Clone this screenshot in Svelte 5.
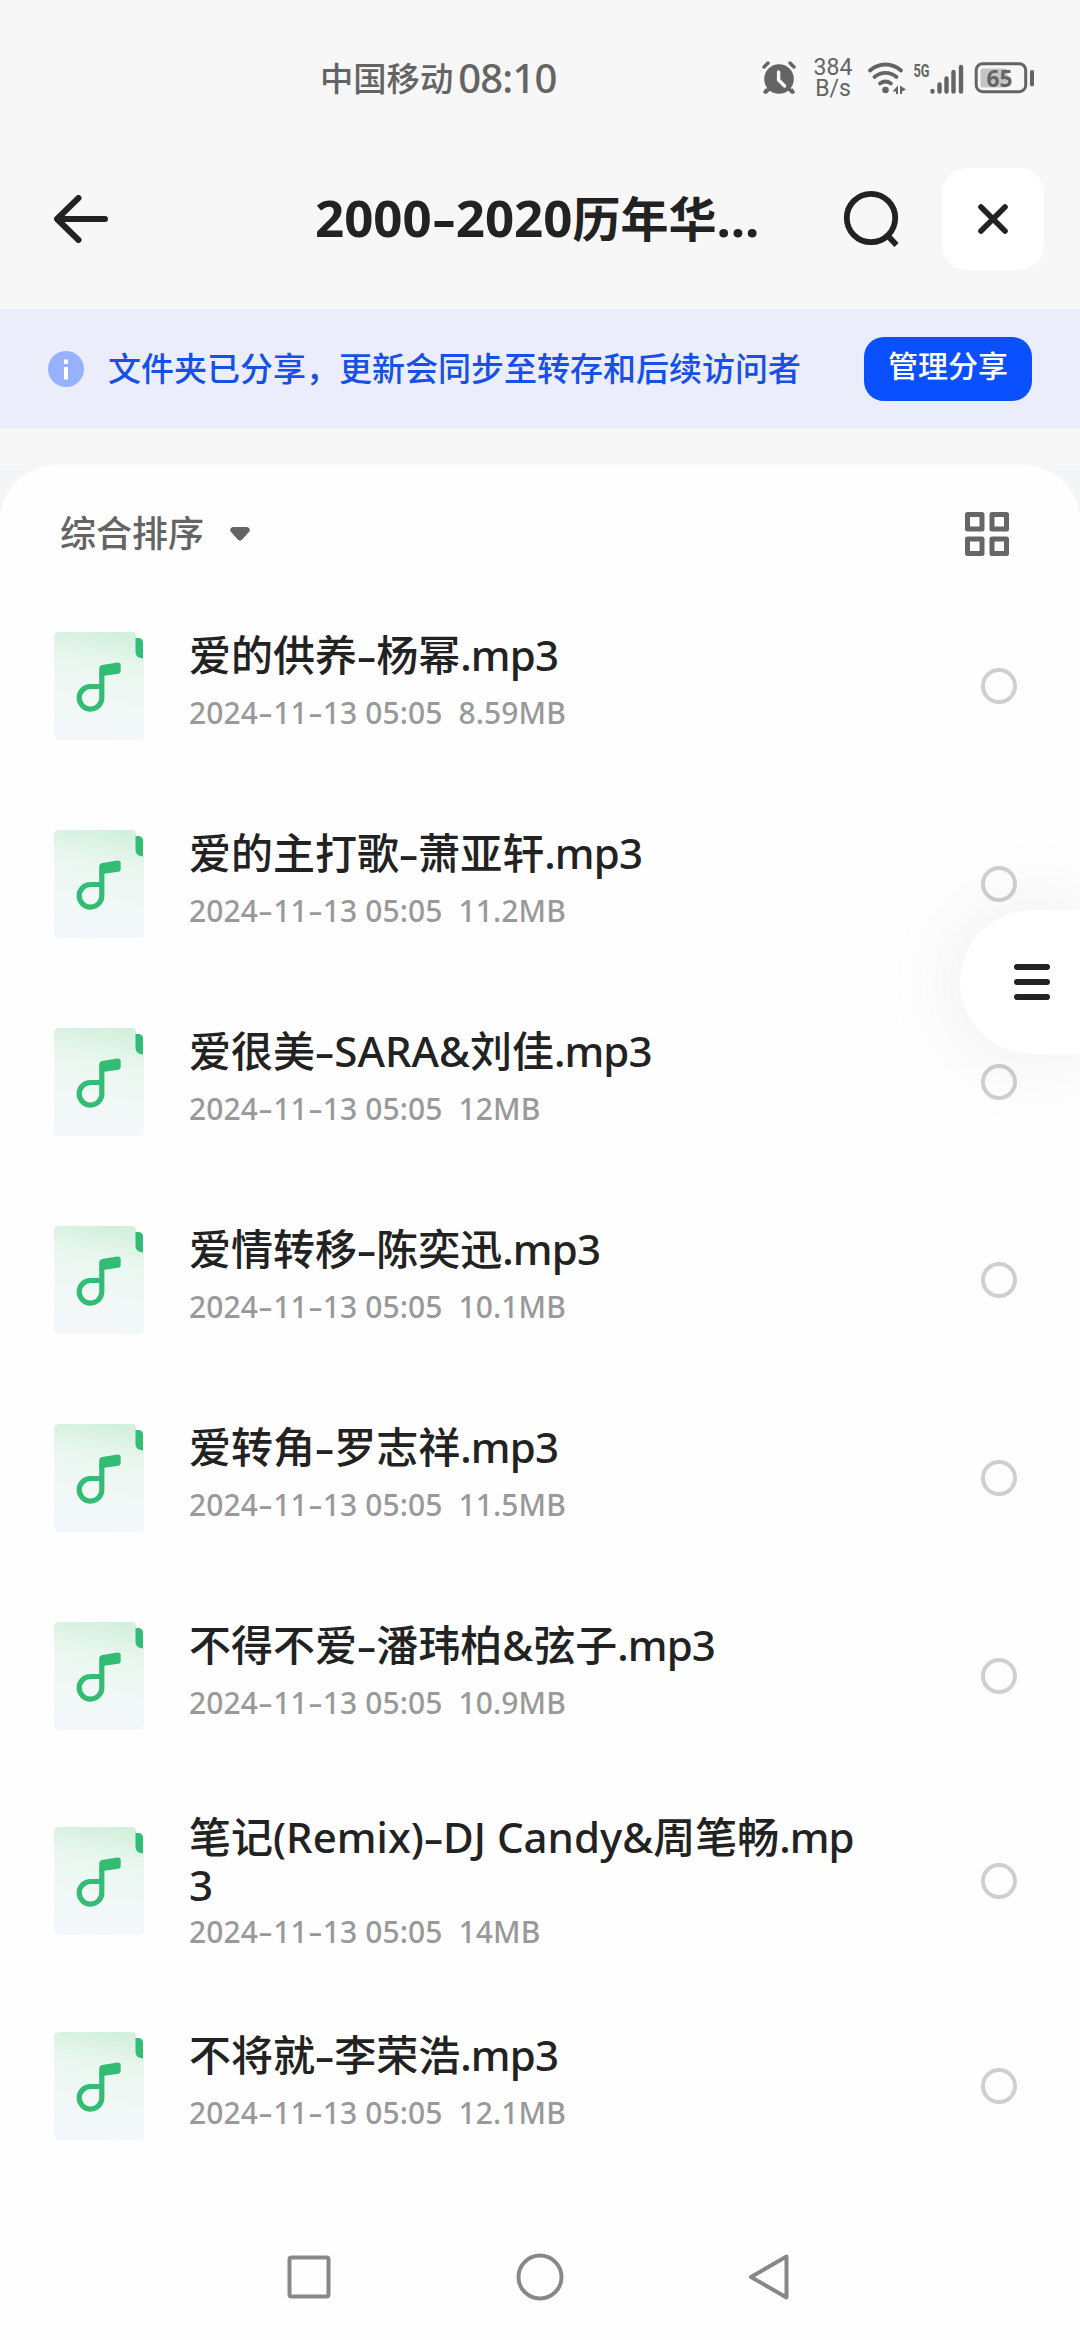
<script lang="ts">
  const title = '2000-2020历年华...';

  const songs = [
    { name: '爱的供养-杨幂.mp3', date: '2024-11-13 05:05', size: '8.59MB' },
    { name: '爱的主打歌-萧亚轩.mp3', date: '2024-11-13 05:05', size: '11.2MB' },
    { name: '爱很美-SARA&刘佳.mp3', date: '2024-11-13 05:05', size: '12MB' },
    { name: '爱情转移-陈奕迅.mp3', date: '2024-11-13 05:05', size: '10.1MB' },
    { name: '爱转角-罗志祥.mp3', date: '2024-11-13 05:05', size: '11.5MB' },
    { name: '不得不爱-潘玮柏&弦子.mp3', date: '2024-11-13 05:05', size: '10.9MB' },
    { name: '笔记(Remix)-DJ Candy&周笔畅.mp3', date: '2024-11-13 05:05', size: '14MB', tall: true },
    { name: '不将就-李荣浩.mp3', date: '2024-11-13 05:05', size: '12.1MB' }
  ];

  // hyphens, latin, chinese and the extension get their own spans
  function runs(text: string) {
    return text.match(/-|[\x20-\x2c\x2e-\x7e]+|[^\x20-\x7e]+/g) ?? [];
  }

  function kind(run: string) {
    if (run === '-') return 'dash';
    if (run === '.mp3') return 'ext';
    return run.charCodeAt(0) < 128 ? 'latin' : 'han';
  }
</script>

{#snippet mixed(text: string)}{#each runs(text) as run}<span class={kind(run)}>{run}</span>{/each}{/snippet}

<div class="screen">
  <div class="status">
    <span class="carrier">中国移动</span>
    <span class="time">08:10</span>
    <div class="status-icons">
      <svg class="alarm" width="34" height="34" viewBox="0 0 34 34">
        <path d="M6 27l-3 4M28 27l3 4M2 6l4-4M32 6l-4-4" stroke="#646464" stroke-width="3.4" stroke-linecap="round" />
        <circle cx="17" cy="18" r="16" fill="#f7f7f7" />
        <circle cx="17" cy="18" r="14.8" fill="#646464" />
        <path d="M7 28l-3 3M27 28l3 3" stroke="#646464" stroke-width="3.4" stroke-linecap="round" />
        <path d="M16.600 11v8l6 6" fill="none" stroke="#f7f7f7" stroke-width="3.400" stroke-linecap="round" stroke-linejoin="round" />
      </svg>
      <div class="speed"><span>384</span><span>B/s</span></div>
      <svg class="wifi" width="40" height="34" viewBox="0 0 40 34">
        <g fill="none" stroke="#646464" stroke-width="3.800" stroke-linecap="round">
          <path d="M3 9.500a23 23 0 0 1 31 0" />
          <path d="M7.500 16a16.500 16.500 0 0 1 22 0" />
          <path d="M13 22.500a9.500 9.500 0 0 1 11 0" />
        </g>
        <circle cx="18.500" cy="29" r="3.300" fill="#646464" />
        <path d="M31 24.500v8.500h-2v-2.500h-3.500zM33 24.500l6 4-4 2v2.500h-2z" fill="#646464" />
      </svg>
      <svg class="signal" width="52" height="34" viewBox="0 0 52 34">
        <text x="0.500" y="15.500" textLength="16" lengthAdjust="spacingAndGlyphs">5G</text>
        <path d="M19.500 30v.500M26.500 23.500v7M33.500 17.500v13M40.500 11v19.500M48 6v24.500" fill="none" stroke="#646464" stroke-width="4.400" stroke-linecap="round" />
      </svg>
      <svg class="battery" width="62" height="34" viewBox="0 0 62 34">
        <rect x="2.200" y="2.700" width="49.500" height="28" rx="6.500" fill="none" stroke="#646464" stroke-width="3" />
        <rect x="6.500" y="7.500" width="27" height="19" rx="2.500" fill="#c4c4c4" />
        <rect x="56" y="9" width="4" height="16.500" rx="2" fill="#646464" />
        <text x="12.500" y="25.500" textLength="26" lengthAdjust="spacingAndGlyphs">65</text>
      </svg>
    </div>
  </div>

  <header class="bar">
    <button class="back" aria-label="返回">
      <svg width="54" height="48" viewBox="0 0 54 48" fill="none" stroke="#222" stroke-width="6" stroke-linecap="round" stroke-linejoin="round">
        <path d="M24.500 3L3 24l21.500 21M4 24h47" />
      </svg>
    </button>
    <h1>{@render mixed(title)}</h1>
    <button class="search" aria-label="搜索">
      <svg width="58" height="58" viewBox="0 0 58 58" fill="none" stroke="#222" stroke-width="5.800">
        <circle cx="28" cy="28" r="24.200" />
        <path d="M44.500 45.500l9 9.500" />
      </svg>
    </button>
    <button class="close" aria-label="关闭">
      <svg width="30" height="30" viewBox="0 0 30 30" stroke="#222" stroke-width="5.600" stroke-linecap="round">
        <path d="M3 3l24 24M27 3L3 27" />
      </svg>
    </button>
  </header>

  <div class="notice">
    <svg width="36" height="36" viewBox="0 0 36 36">
      <circle cx="18" cy="18" r="18" fill="#97b2fd" />
      <path d="M16 8.500h4v4.500h-4zM16 16h4v12.500h-4z" fill="#fff" />
    </svg>
    <p>文件夹已分享，更新会同步至转存和后续访问者</p>
    <button class="manage">管理分享</button>
  </div>

  <div class="backdrop">
    <main class="panel">
      <div class="sort">
        <span>综合排序</span>
        <svg class="caret" width="20" height="14" viewBox="0 0 20 14">
          <path d="M3.500 0h13c3 0 4.300 3 2.400 5l-6.700 7.600c-1.200 1.400-3.200 1.400-4.400 0L1.100 5C-.8 3 .5 0 3.500 0z" fill="#646464" />
        </svg>
        <svg class="grid" width="44" height="44" viewBox="0 0 44 44" fill="none" stroke="#666" stroke-width="5" stroke-linejoin="round">
          <path d="M2.500 2.500h14.500v14.500h-14.500zM27 2.500h14.500v14.500h-14.500zM2.500 27h14.500v14.500h-14.500zM27 27h14.500v14.500h-14.500z" />
        </svg>
      </div>

      <ul>
        {#each songs as song}
          <li class:tall={song.tall}>
            <svg class="file" width="90" height="108" viewBox="0 0 90 108">
              <defs>
                <linearGradient id="paper" x1="0.550" y1="0" x2="0.400" y2="1">
                  <stop offset="0" stop-color="#d3f0dd" />
                  <stop offset="0.300" stop-color="#eaf7f0" />
                  <stop offset="0.700" stop-color="#f2f8f7" />
                  <stop offset="1" stop-color="#f3f7fb" />
                </linearGradient>
              </defs>
              <path d="M5 0h73c2.500 0 4 1.500 4 4v16c0 4 3 6 8 7v76c0 3-2 5-5 5H5c-3 0-5-2-5-5V5c0-3 2-5 5-5z" fill="url(#paper)" />
              <path d="M81.500 6h2.500c4 0 5 2.500 5 5v15.500c-5-.500-7.500-2.500-7.500-7z" fill="#33bd74" />
              <path d="M47.800 42V65.700a11.300 11.300 0 1 1-11.300-11.200h11.300" fill="none" stroke="#33bd74" stroke-width="5.200" />
              <path d="M45.200 36.500c0-2 1.200-3.300 3-3.600l15-2.300c2-.300 3.500.700 3.500 2.400v6c0 1.600-.800 2.400-2.500 2.700L45.200 44.500z" fill="#33bd74" />
            </svg>
            <div class="info">
              <h2>{@render mixed(song.name)}</h2>
              <p>{@render mixed(song.date + '  ' + song.size)}</p>
            </div>
            <span class="radio"></span>
          </li>
        {/each}
      </ul>
    </main>
  </div>

  <nav>
    <svg width="44" height="48" viewBox="0 0 44 48"><rect x="2.500" y="4.500" width="39" height="39" rx="2" /></svg>
    <svg width="48" height="48" viewBox="0 0 48 48"><circle cx="24" cy="24" r="21.500" /></svg>
    <svg width="42" height="48" viewBox="0 0 42 48"><path d="M38.500 3.500v41L3 24z" /></svg>
  </nav>

  <button class="floating" aria-label="菜单">
    <i></i><i></i><i></i>
  </button>
</div>

<style>
  :global(body) {
    background: #fefefe;
  }

  .screen {
    position: relative;
    width: 1080px;
    height: 2340px;
    display: flex;
    flex-direction: column;
    overflow: hidden;
    background: #f7f7f7;
    font-family: "Noto Sans", "Noto Sans CJK SC", sans-serif;
    color: #222;
  }

  .screen * {
    box-sizing: border-box;
  }

  button {
    padding: 0;
    border: 0;
    background: none;
    font-family: inherit;
    display: flex;
    align-items: center;
    justify-content: center;
  }

  h1,
  h2,
  p,
  ul {
    margin: 0;
    padding: 0;
  }

  svg {
    display: block;
    flex: none;
  }

  .dash {
    display: inline-block;
    width: 0.5em;
    text-align: center;
    transform: scaleX(1.5);
  }

  .status {
    height: 156px;
    display: flex;
    align-items: center;
    padding: 0 44px 0 320px;
    color: #646464;
  }

  .carrier {
    font-size: 33.3px;
    font-weight: 500;
    line-height: 48px;
  }

  .time {
    margin-left: 5px;
    font-size: 40px;
    font-weight: 500;
    line-height: 48px;
    letter-spacing: -0.8px;
  }

  .status-icons {
    margin-left: auto;
    display: flex;
    align-items: center;
  }

  .speed {
    width: 40px;
    margin: 0 14px 0 17px;
    display: flex;
    flex-direction: column;
    align-items: center;
    font-family: Roboto, sans-serif;
    font-size: 23px;
    line-height: 21px;
  }

  .signal {
    margin: 0 9px 0 6px;
  }

  .signal text {
    font: 700 18px Roboto, sans-serif;
    fill: #646464;
  }

  .battery text {
    font: 700 24px "Noto Sans", sans-serif;
    fill: #646464;
  }

  .bar {
    height: 153px;
    display: flex;
    align-items: center;
    padding: 0 36px 27px 54px;
  }

  h1 {
    width: 470px;
    margin-left: 207px;
    padding-bottom: 3px;
    font-size: 48px;
    font-weight: 700;
    line-height: 72px;
    white-space: nowrap;
  }

  h1 .latin {
    font-size: 51px;
  }

  .search {
    margin-left: 58px;
  }

  .close {
    width: 102px;
    height: 102px;
    margin-left: auto;
    border-radius: 25px;
    background: #fff;
  }

  .notice {
    height: 120px;
    display: flex;
    align-items: center;
    padding: 0 48px;
    background: #ebedfa;
  }

  .notice p {
    margin-left: 24px;
    font-size: 33px;
    font-weight: 500;
    line-height: 48px;
    color: #1650e6;
    white-space: nowrap;
  }

  .manage {
    width: 168px;
    height: 64px;
    margin-left: auto;
    padding-bottom: 6px;
    border-radius: 20px;
    background: #0b50ff;
    color: #fff;
    font-size: 30px;
    font-weight: 500;
    line-height: 44px;
  }

  .backdrop {
    margin-top: 36px;
    flex: 1;
    background: #f3f5f6;
  }

  .panel {
    height: 100%;
    border-radius: 56px 56px 0 0;
    background: #fefefe;
  }

  .sort {
    height: 122px;
    display: flex;
    align-items: center;
    padding: 16px 71px 0 60px;
    font-size: 36px;
    font-weight: 500;
    line-height: 54px;
    color: #646464;
  }

  .caret {
    margin-left: 26px;
  }

  .grid {
    margin-left: auto;
  }

  ul {
    list-style: none;
  }

  li {
    height: 198px;
    display: flex;
    align-items: center;
    padding: 0 63px 0 54px;
  }

  .info {
    width: 680px;
    margin-left: 45px;
    padding-bottom: 5px;
  }

  h2 {
    font-size: 42px;
    font-weight: 500;
    line-height: 48px;
    word-break: break-all;
    margin-bottom: 11px;
  }

  h2 .dash {
    width: 0.46em;
  }

  h2 .ext {
    letter-spacing: -0.9px;
  }

  .info p {
    font-size: 30px;
    font-weight: 500;
    line-height: 46px;
    letter-spacing: 0.12px;
    color: #999;
    white-space: pre;
  }

  .tall {
    height: 212px;
  }

  .tall .info {
    padding: 6px 0 0;
  }

  .tall h2 {
    margin-bottom: 0;
  }

  .radio {
    width: 36px;
    height: 36px;
    margin-left: auto;
    border: 4px solid #cfcfcf;
    border-radius: 50%;
  }

  nav {
    height: 126px;
    display: flex;
    align-items: center;
    justify-content: space-between;
    padding: 0 290px 0 287px;
    background: #fefefe;
  }

  nav svg {
    fill: none;
    stroke: #888;
    stroke-width: 4px;
    stroke-linejoin: round;
  }

  .floating {
    position: absolute;
    top: 910px;
    right: 0;
    width: 120px;
    height: 144px;
    padding-left: 24px;
    flex-direction: column;
    gap: 9px;
    border-radius: 72px 0 0 72px;
    background: #fff;
    box-shadow: 0 0 90px rgba(0, 0, 0, 0.08);
  }

  .floating i {
    width: 36px;
    height: 6px;
    border-radius: 3px;
    background: #222;
  }
</style>
